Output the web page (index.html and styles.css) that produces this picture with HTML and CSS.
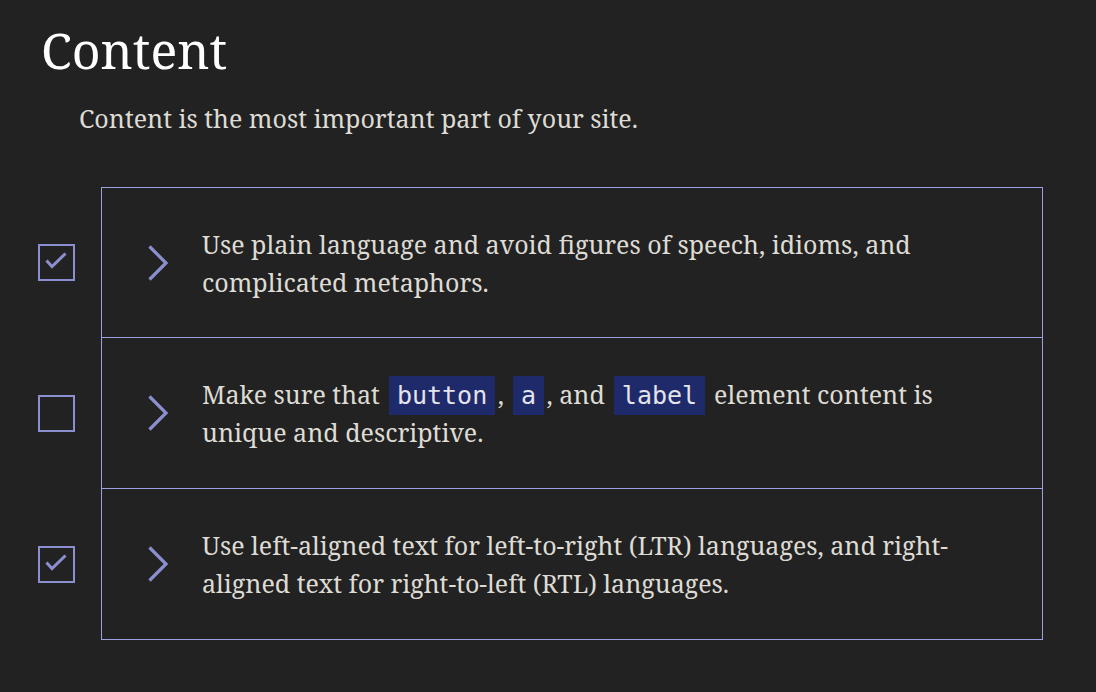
FILE: index.html
```html
<!DOCTYPE html>
<html lang="en">
<head>
<meta charset="utf-8">
<title>Content</title>
<link rel="stylesheet" href="styles.css">
</head>
<body>
<main class="page">
  <h1 class="title">Content</h1>
  <p class="lead">Content is the most important part of your site.</p>
  <ul class="checklist">
    <li class="item">
      <span class="check checked"><svg viewBox="0 0 33 33" width="33" height="33"><path d="M6.5 14.5 L12 20.5 L25.5 7.5" fill="none" stroke="#8b8fcf" stroke-width="3"/></svg></span>
      <div class="row">
        <svg class="chev" viewBox="0 0 22 36" width="22" height="36"><path d="M2.5 1.5 L19 18 L2.5 34.5" fill="none" stroke="#8b8fcf" stroke-width="3.2"/></svg>
        <p class="text">Use plain language and avoid figures of speech, idioms, and complicated metaphors.</p>
      </div>
    </li>
    <li class="item">
      <span class="check"></span>
      <div class="row">
        <svg class="chev" viewBox="0 0 22 36" width="22" height="36"><path d="M2.5 1.5 L19 18 L2.5 34.5" fill="none" stroke="#8b8fcf" stroke-width="3.2"/></svg>
        <p class="text">Make sure that <code>button</code>, <code>a</code>, and <code>label</code> element content is unique and descriptive.</p>
      </div>
    </li>
    <li class="item">
      <span class="check checked"><svg viewBox="0 0 33 33" width="33" height="33"><path d="M6.5 14.5 L12 20.5 L25.5 7.5" fill="none" stroke="#8b8fcf" stroke-width="3"/></svg></span>
      <div class="row">
        <svg class="chev" viewBox="0 0 22 36" width="22" height="36"><path d="M2.5 1.5 L19 18 L2.5 34.5" fill="none" stroke="#8b8fcf" stroke-width="3.2"/></svg>
        <p class="text">Use left-aligned text for left-to-right (LTR) languages, and right-aligned text for right-to-left (RTL) languages.</p>
      </div>
    </li>
  </ul>
</main>
</body>
</html>
```

FILE: styles.css
```css
html, body {
  margin: 0;
  padding: 0;
  background: #222222;
}
body {
  font-family: "Noto Serif", "DejaVu Serif", "Liberation Serif", serif;
  color: #dedbd4;
}
.page {
  padding: 18px 53px 0 38px;
}
.title {
  margin: 0 0 0 3px;
  font-size: 50px;
  font-weight: 400;
  line-height: 64px;
  color: #ffffff;
}
.lead {
  margin: 18px 0 0 41px;
  font-size: 25px;
  line-height: 36px;
}
.checklist {
  list-style: none;
  margin: 51px 0 0 0;
  padding: 0;
}
.item {
  display: flex;
  align-items: center;
}
.check {
  flex: none;
  box-sizing: border-box;
  width: 37px;
  height: 37px;
  border: 2px solid #8b8fcf;
  display: flex;
  align-items: center;
  justify-content: center;
  margin-right: 26px;
}
.row {
  flex: 1;
  display: flex;
  align-items: center;
  height: 151px;
  box-sizing: border-box;
  border: 1px solid #9da0e0;
  border-top: none;
  padding: 0 30px 0 45px;
}
.item:first-child .row {
  border-top: 1px solid #9da0e0;
}
.chev {
  flex: none;
  margin-right: 33px;
}
.text {
  margin: 0;
  font-size: 25px;
  line-height: 38px;
}
code {
  font-family: "DejaVu Sans Mono", "Liberation Mono", monospace;
  font-size: 25px;
  line-height: 1;
  background: #1f2a6b;
  color: #e4e4ec;
  padding: 5px 7.5px;
  margin: 0 3px;
}
```
